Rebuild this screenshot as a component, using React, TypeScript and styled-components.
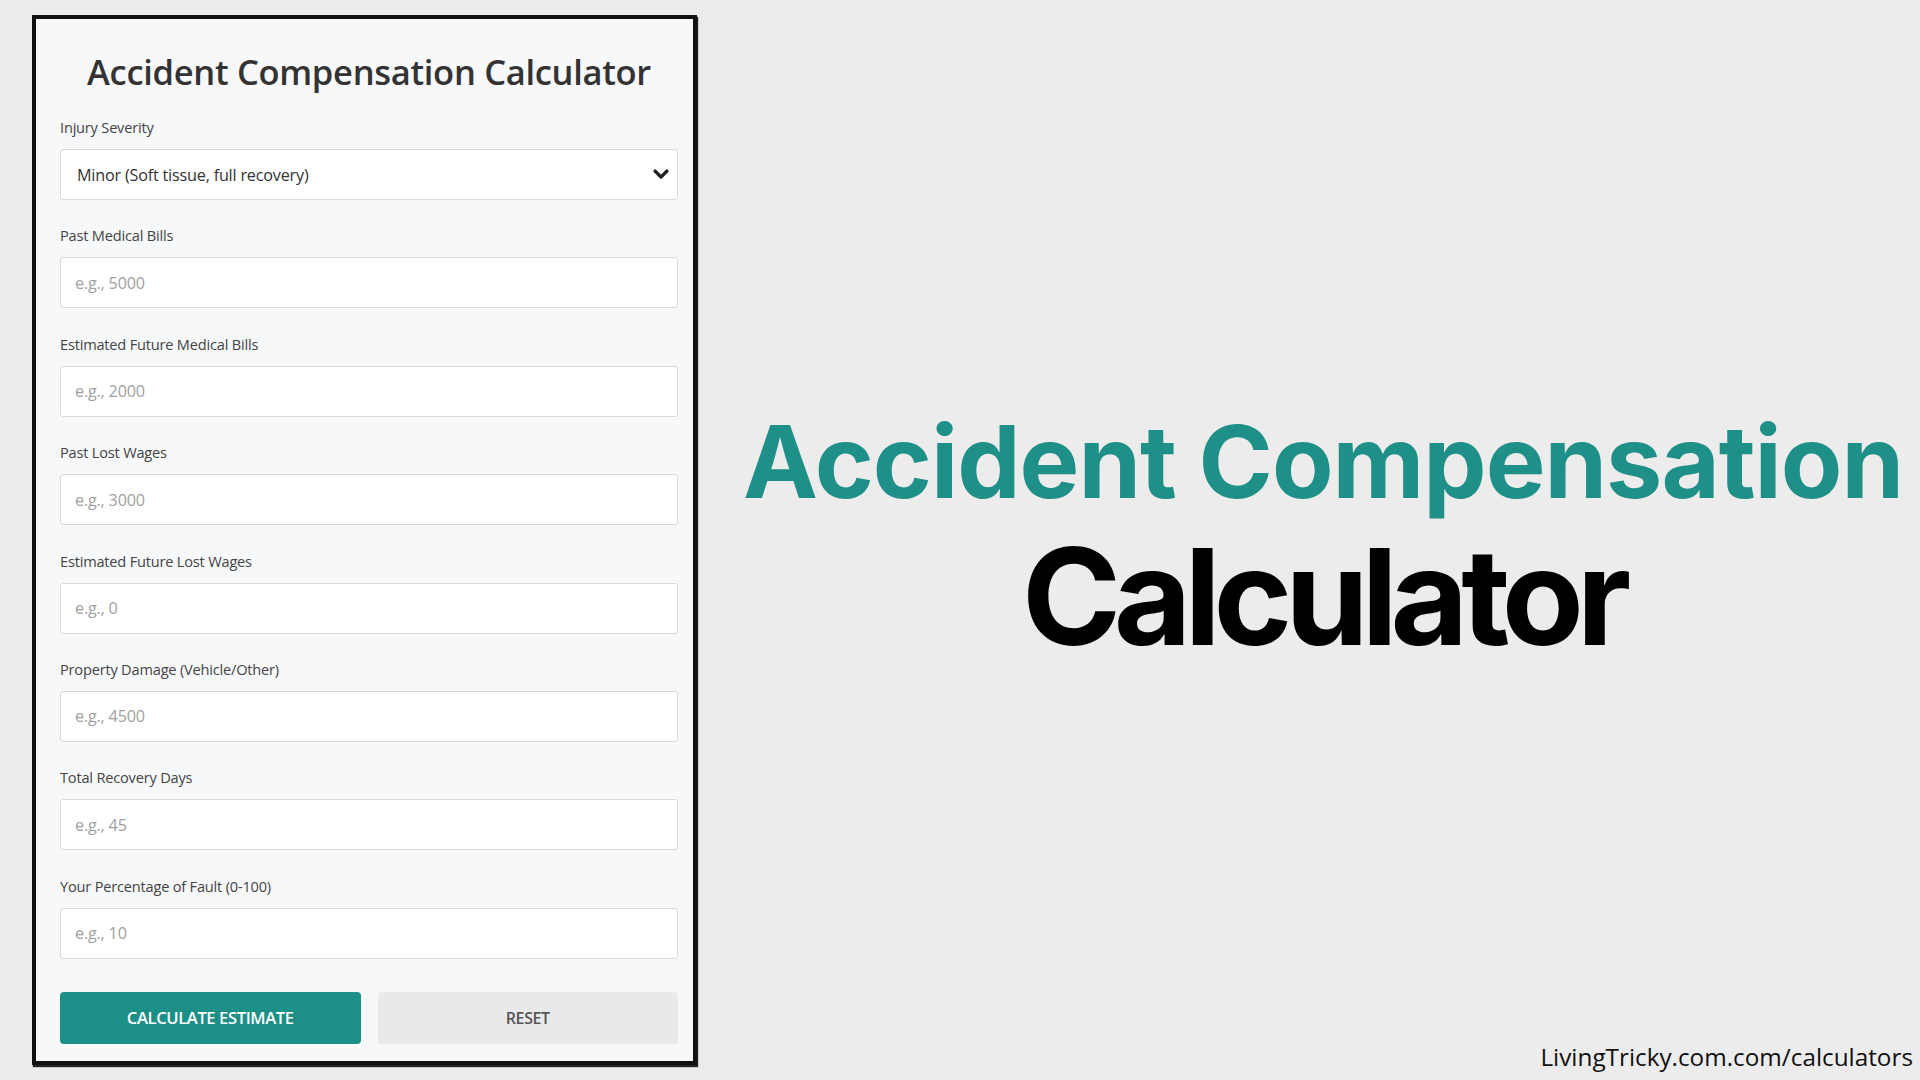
import React from 'react';
import styled, { createGlobalStyle } from 'styled-components';
import { ChevronDown } from 'lucide-react';

interface Field {
  label: string;
  placeholder: string;
}

const GlobalStyle = createGlobalStyle`
  html, body {
    margin: 0;
    padding: 0;
    background: #ececec;
  }
  * {
    box-sizing: border-box;
  }
`;

const Page = styled.div`
  display: flex;
  width: 1920px;
  height: 1080px;
  overflow: hidden;
  background: #ececec;
`;

const Card = styled.div`
  width: 665px;
  height: 1050px;
  margin: 15px 0 0 32px;
  padding: 32px 15px 16px 24px;
  background: #f7f8fa;
  border: 4px solid #111;
  box-shadow: 1px 2px 1px #222;
  font-family: 'Open Sans', 'Noto Sans', sans-serif;
  flex-shrink: 0;
`;

const CardTitle = styled.h1`
  margin: 0 0 25px;
  font-size: 34.5px;
  line-height: 42px;
  font-weight: 600;
  color: #333;
  text-align: center;
  letter-spacing: -0.3px;
`;

const FieldGroup = styled.div`
  margin-bottom: 26.4px;
`;

const Label = styled.label`
  display: block;
  font-size: 14.6px;
  line-height: 18px;
  color: #444;
  margin-bottom: 13px;
  letter-spacing: -0.2px;
`;

const SelectWrap = styled.div`
  position: relative;
`;

const Select = styled.select`
  width: 100%;
  height: 51px;
  appearance: none;
  padding: 0 40px 0 16px;
  font-family: inherit;
  font-size: 16.2px;
  color: #333;
  background: #fff;
  border: 1px solid #d9d9d9;
  border-radius: 3px;
  letter-spacing: -0.2px;
  outline: none;
`;

const Chevron = styled.span`
  position: absolute;
  right: 5px;
  top: 13px;
  display: flex;
  color: #222;
  pointer-events: none;
`;

const Input = styled.input`
  width: 100%;
  height: 51px;
  padding: 0 14px;
  font-family: inherit;
  font-size: 16.2px;
  color: #333;
  background: #fff;
  border: 1px solid #d9d9d9;
  border-radius: 3px;
  outline: none;
  letter-spacing: -0.2px;

  &::placeholder {
    color: #a0a0a0;
  }
`;

const ButtonRow = styled.div`
  display: grid;
  grid-template-columns: 1fr 1fr;
  gap: 17px;
  margin-top: 33px;
`;

const Button = styled.button<{ $primary?: boolean }>`
  height: 52px;
  border: none;
  border-radius: 4px;
  font-family: inherit;
  font-size: ${(p) => (p.$primary ? '16.6px' : '16px')};
  font-weight: 600;
  letter-spacing: -0.4px;
  text-transform: uppercase;
  cursor: pointer;
  background: ${(p) => (p.$primary ? '#1c8f87' : '#e8e9eb')};
  color: ${(p) => (p.$primary ? '#fff' : '#555')};
`;

const Side = styled.div`
  flex: 1;
  display: flex;
  flex-direction: column;
  padding: 0 7px 8px 36px;
`;

const Hero = styled.div`
  flex: 1;
  display: flex;
  flex-direction: column;
  align-items: center;
  justify-content: center;
  padding-top: 27px;
  font-family: Inter, 'Noto Sans', sans-serif;
  font-weight: 700;
`;

const HeroTop = styled.div`
  font-size: 100.5px;
  line-height: 1.2;
  color: #1e9088;
  letter-spacing: -1px;
`;

const HeroBottom = styled.div`
  margin-top: 3px;
  font-size: 134px;
  line-height: 1.05;
  color: #000;
  letter-spacing: -7.2px;
`;

const Footer = styled.div`
  align-self: flex-end;
  font-family: 'Open Sans', 'Noto Sans', sans-serif;
  font-size: 24.3px;
  line-height: 30px;
  color: #111;
`;

const fields: Field[] = [
  { label: 'Past Medical Bills', placeholder: 'e.g., 5000' },
  { label: 'Estimated Future Medical Bills', placeholder: 'e.g., 2000' },
  { label: 'Past Lost Wages', placeholder: 'e.g., 3000' },
  { label: 'Estimated Future Lost Wages', placeholder: 'e.g., 0' },
  { label: 'Property Damage (Vehicle/Other)', placeholder: 'e.g., 4500' },
  { label: 'Total Recovery Days', placeholder: 'e.g., 45' },
  { label: 'Your Percentage of Fault (0-100)', placeholder: 'e.g., 10' },
];

const App: React.FC = () => {
  return (
    <>
      <GlobalStyle />
      <Page>
        <Card>
          <CardTitle>Accident Compensation Calculator</CardTitle>
          <FieldGroup>
            <Label>Injury Severity</Label>
            <SelectWrap>
              <Select defaultValue="minor">
                <option value="minor">Minor (Soft tissue, full recovery)</option>
                <option value="moderate">Moderate</option>
                <option value="severe">Severe</option>
              </Select>
              <Chevron>
                <ChevronDown size={24} strokeWidth={3.2} />
              </Chevron>
            </SelectWrap>
          </FieldGroup>
          {fields.map((f, i) => (
            <FieldGroup key={i}>
              <Label>{f.label}</Label>
              <Input type="number" placeholder={f.placeholder} />
            </FieldGroup>
          ))}
          <ButtonRow>
            <Button $primary>Calculate Estimate</Button>
            <Button>Reset</Button>
          </ButtonRow>
        </Card>
        <Side>
          <Hero>
            <HeroTop>Accident Compensation</HeroTop>
            <HeroBottom>Calculator</HeroBottom>
          </Hero>
          <Footer>LivingTricky.com.com/calculators</Footer>
        </Side>
      </Page>
    </>
  );
};

export default App;
